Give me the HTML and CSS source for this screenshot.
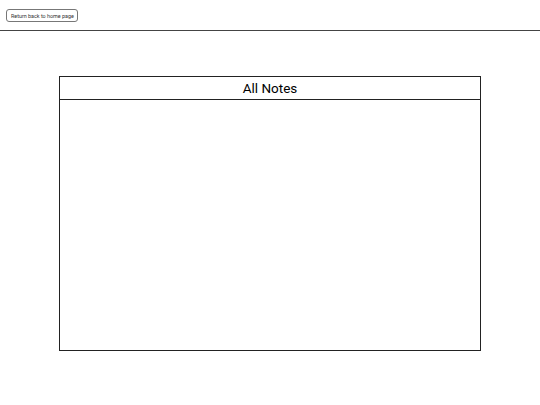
FILE: index.html
```html
<!doctype html>
<html lang="en">
<head>
    <meta charset="utf-8">
    <meta name="viewport" content="width=device-width, initial-scale=1">
    <title>All Notes</title>
    <link rel="stylesheet" href="styles.css">
</head>
<body>
<header class="top-bar">
    <button class="home-button">Return back to home page</button>
</header>
<main class="notes-page">
    <section class="notes-box">
        <h1 class="notes-title">All Notes</h1>
        <div class="notes-list">
            <!-- notes go here -->
        </div>
    </section>
</main>
</body>
</html>
```

FILE: styles.css
```css
body {
    margin: 0;
    font-family: Roboto, "Liberation Sans", sans-serif;
    background-color: #fff;
}

.top-bar {
    padding: 9px 6px 8px;
    border-bottom: 1px solid #444;
}

.home-button {
    display: block;
    font-family: Roboto, sans-serif;
    font-size: 5.4px;
    color: #333;
    background-color: #fff;
    border: 1px solid #777;
    border-radius: 3px;
    padding: 0 4px;
    height: 13px;
    width: 72px;
    white-space: nowrap;
}

.notes-page {
    padding-top: 45px;
}

.notes-box {
    width: 422px;
    height: 275px;
    margin: 0 auto;
    border: 1px solid #222;
    box-sizing: border-box;
    display: flex;
    flex-direction: column;
}

.notes-title {
    margin: 0;
    font-size: 13.5px;
    font-weight: 400;
    text-align: center;
    color: #000;
    height: 22px;
    line-height: 23px;
    border-bottom: 1px solid #222;
}

.notes-list {
    flex: 1;
}
```
